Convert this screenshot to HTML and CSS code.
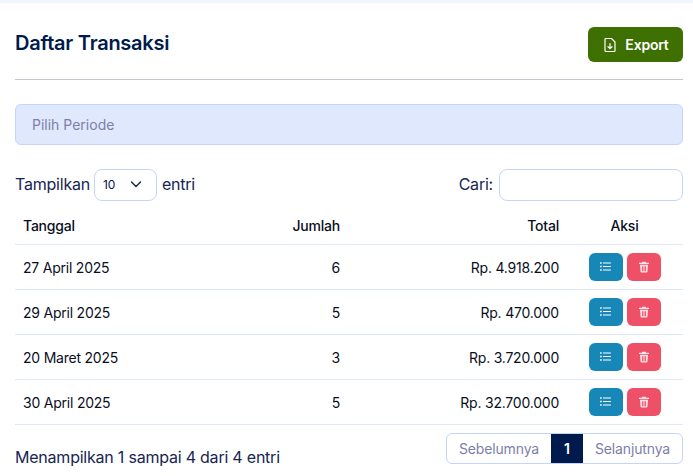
FILE: index.html
```html
<!DOCTYPE html>
<html lang="id">
<head>
<meta charset="utf-8">
<title>Daftar Transaksi</title>
<link rel="stylesheet" href="styles.css">
</head>
<body>
<div class="strip"></div>
<main class="page">
  <header class="head">
    <h1 class="title">Daftar Transaksi</h1>
    <button class="export">
      <svg class="export-icon" viewBox="0 0 16 16" width="16" height="16" fill="none" stroke="currentColor" stroke-width="1.2" stroke-linecap="round" stroke-linejoin="round"><path d="M4 1.500h5.500L13 5v8.500a1 1 0 0 1-1 1H4a1 1 0 0 1-1-1v-11a1 1 0 0 1 1-1z"/><path d="M8 6.500v5M6 9.700l2 1.900 2-1.900"/></svg>
      <span>Export</span>
    </button>
  </header>
  <div class="rule"></div>
  <div class="period">Pilih Periode</div>
  <div class="controls">
    <label class="length"><span class="ctl-text">Tampilkan</span>
      <span class="select"><span>10</span>
        <svg viewBox="0 0 16 16" width="16" height="16" fill="none" stroke="#1f2a44" stroke-width="1.5" stroke-linecap="round" stroke-linejoin="round"><path d="M3.500 6l4.500 4.500L12.500 6"/></svg>
      </span><span class="ctl-text">entri</span></label>
    <label class="search"><span class="ctl-text">Cari:</span><span class="input"></span></label>
  </div>
  <table class="table">
    <thead>
      <tr><th class="c-date">Tanggal</th><th class="c-num">Jumlah</th><th class="c-total">Total</th><th class="c-act">Aksi</th></tr>
    </thead>
    <tbody>
      <tr><td>27 April 2025</td><td class="c-num">6</td><td class="c-total">Rp. 4.918.200</td><td class="c-act"><div class="acts"><button class="btn info"><svg viewBox="0 0 12 12" width="13" height="13" fill="currentColor"><path d="M1 2h1.500v1.500H1zM1 5.250h1.500v1.500H1zM1 8.500h1.500V10H1zM3.700 2.300H11v1H3.700zM3.700 5.500H11v1H3.700zM3.700 8.700H11v1H3.700z"/></svg></button><button class="btn danger"><svg viewBox="0 0 12 12" width="12" height="12" fill="currentColor"><path d="M4.300.8h3.400l.5 1H11v1.300H1V1.800h2.800zM2 3.800h8l-.6 7a.8.8 0 0 1-.8.7H3.400a.8.8 0 0 1-.8-.7zM4 5.200v5h.9v-5zM5.600 5.200v5h.9v-5zM7.100 5.200v5H8v-5z" fill-rule="evenodd"/></svg></button></div></td></tr>
      <tr><td>29 April 2025</td><td class="c-num">5</td><td class="c-total">Rp. 470.000</td><td class="c-act"><div class="acts"><button class="btn info"><svg viewBox="0 0 12 12" width="13" height="13" fill="currentColor"><path d="M1 2h1.500v1.500H1zM1 5.250h1.500v1.500H1zM1 8.500h1.500V10H1zM3.700 2.300H11v1H3.700zM3.700 5.500H11v1H3.700zM3.700 8.700H11v1H3.700z"/></svg></button><button class="btn danger"><svg viewBox="0 0 12 12" width="12" height="12" fill="currentColor"><path d="M4.300.8h3.400l.5 1H11v1.300H1V1.800h2.800zM2 3.800h8l-.6 7a.8.8 0 0 1-.8.7H3.400a.8.8 0 0 1-.8-.7zM4 5.200v5h.9v-5zM5.600 5.200v5h.9v-5zM7.100 5.200v5H8v-5z" fill-rule="evenodd"/></svg></button></div></td></tr>
      <tr><td>20 Maret 2025</td><td class="c-num">3</td><td class="c-total">Rp. 3.720.000</td><td class="c-act"><div class="acts"><button class="btn info"><svg viewBox="0 0 12 12" width="13" height="13" fill="currentColor"><path d="M1 2h1.500v1.500H1zM1 5.250h1.500v1.500H1zM1 8.500h1.500V10H1zM3.700 2.300H11v1H3.700zM3.700 5.500H11v1H3.700zM3.700 8.700H11v1H3.700z"/></svg></button><button class="btn danger"><svg viewBox="0 0 12 12" width="12" height="12" fill="currentColor"><path d="M4.300.8h3.400l.5 1H11v1.300H1V1.800h2.800zM2 3.800h8l-.6 7a.8.8 0 0 1-.8.7H3.400a.8.8 0 0 1-.8-.7zM4 5.200v5h.9v-5zM5.600 5.200v5h.9v-5zM7.100 5.200v5H8v-5z" fill-rule="evenodd"/></svg></button></div></td></tr>
      <tr><td>30 April 2025</td><td class="c-num">5</td><td class="c-total">Rp. 32.700.000</td><td class="c-act"><div class="acts"><button class="btn info"><svg viewBox="0 0 12 12" width="13" height="13" fill="currentColor"><path d="M1 2h1.500v1.500H1zM1 5.250h1.500v1.500H1zM1 8.500h1.500V10H1zM3.700 2.300H11v1H3.700zM3.700 5.500H11v1H3.700zM3.700 8.700H11v1H3.700z"/></svg></button><button class="btn danger"><svg viewBox="0 0 12 12" width="12" height="12" fill="currentColor"><path d="M4.300.8h3.400l.5 1H11v1.300H1V1.800h2.800zM2 3.800h8l-.6 7a.8.8 0 0 1-.8.7H3.400a.8.8 0 0 1-.8-.7zM4 5.200v5h.9v-5zM5.600 5.200v5h.9v-5zM7.100 5.200v5H8v-5z" fill-rule="evenodd"/></svg></button></div></td></tr>
    </tbody>
  </table>
  <footer class="foot">
    <div class="info-text">Menampilkan 1 sampai 4 dari 4 entri</div>
    <nav class="pager"><span class="pg">Sebelumnya</span><span class="pg current">1</span><span class="pg">Selanjutnya</span></nav>
  </footer>
</main>
</body>
</html>
```
FILE: styles.css
```css
* { box-sizing: border-box; }
html, body { margin: 0; height: 100%; overflow: hidden; background: #fff; }
body { font-family: Inter, "Liberation Sans", sans-serif; color: #001a4d; font-size: 16px; letter-spacing: -0.22px; }
.strip { height: 3px; background: #f0f6ff; }
.page { padding: 24px 10px 0 15px; }
.head { display: flex; justify-content: space-between; align-items: flex-start; height: 52px; }
.title { margin: 0; font-size: 20px; line-height: 32px; font-weight: 600; color: #001a4d; letter-spacing: -0.25px; }
.export { display: flex; align-items: center; justify-content: center; gap: 7px; width: 95px; height: 35px; padding: 0; border: 0; border-radius: 6px; background: #3d7000; color: #fff; font: 600 14px Inter, sans-serif; letter-spacing: -0.2px; }
.rule { height: 1px; background: #c4c6d0; }
.period { margin-top: 24px; height: 41px; padding-left: 16px; display: flex; align-items: center; background: #e0e8fe; border: 1px solid #c4d5fb; border-radius: 6px; font-size: 14px; letter-spacing: 0; color: #7d7fa8; }
.controls { margin-top: 24px; display: flex; justify-content: space-between; align-items: center; height: 32px; color: #172554; }
.length, .search { display: flex; align-items: center; }
.length { gap: 4px; }
.search { gap: 6px; }
.ctl-text { padding-bottom: 2px; }
.select { display: flex; align-items: center; justify-content: space-between; width: 63px; height: 32px; margin-right: 1px; padding: 0 12px 2px 8px; border: 1px solid #c4d5fb; border-radius: 8px; font-size: 12px; letter-spacing: 0; color: #001a4d; }
.input { width: 184px; height: 32px; border: 1px solid #c4d5fb; border-radius: 8px; }
.table { width: 100%; margin-top: 5px; border-collapse: collapse; table-layout: fixed; font-size: 14px; color: #0a0f1e; }
.table th { height: 38px; padding: 2px 8px 0; font-weight: 500; text-align: left; border-bottom: 1px solid #dfe8fb; }
.table td { height: 45px; padding: 2px 8px 0; border-bottom: 1px solid #dfe8fb; }
.c-date { width: 233px; }
.table .c-num { width: 100px; text-align: right; }
.table .c-total { text-align: right; padding-right: 9px; }
.table .c-act { width: 115px; text-align: center; padding-left: 7px; padding-right: 9px; }
.table td.c-act { padding-top: 0; }
.acts { display: flex; justify-content: center; gap: 4px; }
.btn { width: 34px; height: 28px; padding: 0; border: 0; border-radius: 6px; color: #fff; display: flex; align-items: center; justify-content: center; }
.info { background: #1787b8; }
.danger { background: #ee5068; color: #ffe3e6; }
.foot { display: flex; justify-content: space-between; align-items: flex-start; margin-top: 8px; height: 32px; }
.info-text { color: #172554; line-height: 26px; padding-top: 11px; }
.pager { display: flex; height: 31px; border: 1px solid #c4d5fb; border-radius: 6px; overflow: hidden; font-size: 14px; letter-spacing: -0.15px; color: #7d7fa8; }
.pg { display: flex; align-items: center; padding: 0 12px; }
.current { width: 32px; justify-content: center; padding: 0; background: #001a4d; color: #fff; font-weight: 600; }
```
